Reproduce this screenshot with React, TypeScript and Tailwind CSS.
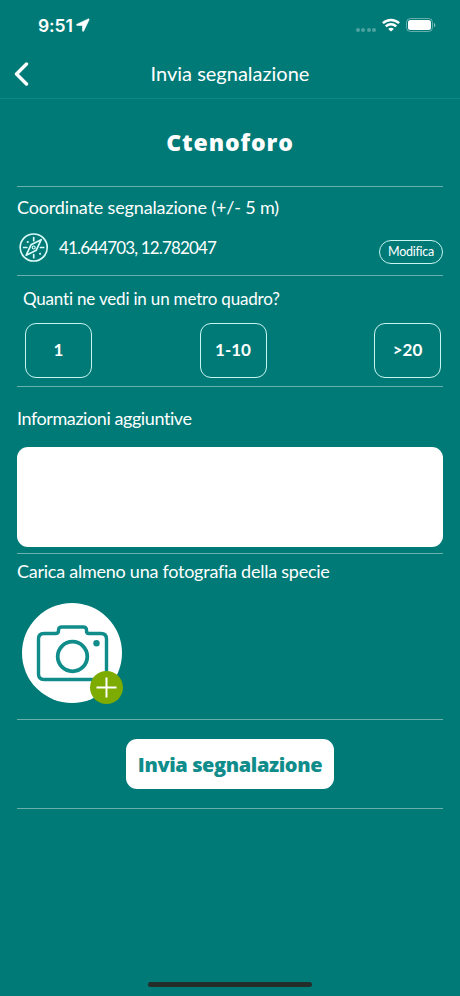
import type { ReactNode } from "react";

function StatusBar() {
  return (
    <div className="flex h-[50px] items-center justify-between pl-[38px] pr-[24px]">
      <div className="flex items-center gap-[3px] pt-[2px]">
        <span className="font-['Inter',sans-serif] text-[17.500px] font-semibold leading-none tracking-[-0.1px]">9:51</span>
        <svg className="mb-[2px]" width="14" height="14" viewBox="0 0 14 14" fill="white">
          <path d="M12.300.9.900 6.200c-.7.400-.6 1.200.3 1.200l5.300.100v5.200c0 .9.900 1 1.200.3L13.100 1.700c.2-.5-.2-1-.8-.8Z" stroke="white" strokeWidth=".6" />
        </svg>
      </div>
      <div className="flex items-center">
        <div className="mr-[6px] mt-[9px] flex gap-[1.500px]">
          {[0, 1, 2, 3].map((i) => (
            <span key={i} className="h-1 w-1 rounded-full bg-white/30" />
          ))}
        </div>
        <svg width="18" height="14" viewBox="0 0 18 14" fill="none" stroke="white" strokeWidth="2.500">
          <path d="M.9 5.100C5.500.8 12.500.8 17.100 5.100" />
          <path d="M3.800 8.400c3-2.800 7.400-2.800 10.400 0" />
          <path d="M9 13.600 6.200 10.900c1.600-1.400 4-1.400 5.600 0Z" fill="white" stroke="none" />
        </svg>
        <svg className="ml-[6px]" width="30" height="14" viewBox="0 0 30 14">
          <rect x=".5" y=".5" width="26" height="13" rx="4" fill="none" stroke="white" strokeOpacity=".4" />
          <rect x="2" y="2" width="23" height="10" rx="2.500" fill="white" />
          <path d="M28 4.700c1.800.8 1.800 3.800 0 4.600Z" fill="white" fillOpacity=".5" />
        </svg>
      </div>
    </div>
  );
}

function Section({ className, children }: { className: string; children?: ReactNode }) {
  return <section className={`mx-[17px] border-b border-[#69b1af] ${className}`}>{children}</section>;
}

function Compass() {
  return (
    <svg width="30" height="30" viewBox="0 0 30 30" fill="none" stroke="#d8fbf8" strokeWidth="1.700" strokeLinecap="round">
      <circle cx="14.700" cy="14.500" r="13.500" />
      <path d="M14.700 4.500v3.200M14.700 21.500v3.200M4.600 14.500h3.200M21.500 14.500h3.200" />
      <path d="M22.200 6.700 17.300 17.200 7.200 22.200 12 11.800Z" strokeLinejoin="round" />
      <circle cx="14.700" cy="14.500" r="1.500" strokeWidth="1.200" />
      <path d="M8.700 8.900h.1M21 20.700h.1" strokeWidth="2" />
    </svg>
  );
}

function CameraButton() {
  return (
    <button className="relative block h-[100px] w-[100px] rounded-full bg-white">
      <svg width="100" height="100" viewBox="0 0 100 100" fill="none">
        <path
          d="M22 30.500H33Q36.500 30.500 36.500 28V27Q36.500 24 40 24H61Q64.500 24 64.500 27V28Q64.500 30.500 67 30.500H79Q84.500 30.500 84.500 36V71Q84.500 76.500 79 76.500H22Q16.500 76.500 16.500 71V36Q16.500 30.500 22 30.500Z"
          stroke="#108d8b"
          strokeWidth="3.400"
        />
        <circle cx="50.500" cy="53.500" r="14.800" stroke="#108d8b" strokeWidth="3.800" />
        <circle cx="74.500" cy="40.300" r="3.200" fill="#108d8b" />
      </svg>
      <span className="absolute left-[67.500px] top-[67.500px] block h-[33px] w-[33px] rounded-full bg-[#7dab00]">
        <svg width="33" height="33" viewBox="0 0 33 33" stroke="white" strokeWidth="2">
          <path d="M16.500 6.500v20M6.500 16.500h20" />
        </svg>
      </span>
    </button>
  );
}

export default function App() {
  return (
    <main className="flex h-[996px] w-[460px] flex-col overflow-hidden bg-[#007a77] font-['Lato',sans-serif] text-white [font-variant-ligatures:none]">
      <StatusBar />
      <header className="grid h-[49px] grid-cols-[60px_1fr_60px] items-center border-b border-[#108581]">
        <button className="pl-[14px]">
          <svg width="15" height="24" viewBox="0 0 15 24" fill="none" stroke="white" strokeWidth="3.400" strokeLinecap="round" strokeLinejoin="round">
            <path d="M12.500 2 2.500 12l10 10" />
          </svg>
        </button>
        <h1 className="whitespace-nowrap pb-[2px] text-center text-[20px] leading-6">Invia segnalazione</h1>
      </header>
      <Section className="flex h-[88px] items-center justify-center">
        <h2 className="whitespace-nowrap pb-[2px] font-['Open_Sans',sans-serif] text-[23px] font-extrabold leading-7 tracking-[0.900px]">Ctenoforo</h2>
      </Section>
      <Section className="h-[89px] pt-[8px]">
        <p className="whitespace-nowrap text-[18px] leading-6 tracking-[-0.150px]">Coordinate segnalazione (+/- 5 m)</p>
        <div className="flex pl-[2px] pt-[14px]">
          <Compass />
          <span className="ml-[10px] whitespace-nowrap text-[17px] leading-[29px] tracking-[-0.850px]">41.644703, 12.782047</span>
          <button className="ml-auto mt-[7px] h-6 w-[64px] rounded-full border border-[#c9f5f1] pt-px text-[12.500px] leading-none tracking-[-0.250px]">Modifica</button>
        </div>
      </Section>
      <Section className="h-[111px] pt-[11px]">
        <p className="whitespace-nowrap pl-[6px] text-[17px] leading-6 tracking-[-0.180px]">Quanti ne vedi in un metro quadro?</p>
        <div className="flex justify-between pl-[8px] pr-[2px] pt-[12px]">
          {["1", "1-10", ">20"].map((label) => (
            <button key={label} className="h-[55px] w-[67px] rounded-[11px] border border-[#c9f5f1] pb-[2px] text-[17px] font-bold leading-none">
              {label}
            </button>
          ))}
        </div>
      </Section>
      <Section className="h-[167px] pt-[19px]">
        <label htmlFor="notes" className="block whitespace-nowrap text-[18px] leading-6 tracking-[-0.420px]">Informazioni aggiuntive</label>
        <textarea id="notes" className="mt-[17px] block h-[100px] w-full resize-none rounded-[11px] bg-white p-3 text-[#007a77] outline-none" />
      </Section>
      <Section className="h-[166px] pt-[5px]">
        <p className="whitespace-nowrap text-[18px] leading-6 tracking-[-0.250px]">Carica almeno una fotografia della specie</p>
        <div className="pl-[5px] pt-[20px]">
          <CameraButton />
        </div>
      </Section>
      <Section className="flex h-[89px] items-center justify-center">
        <button className="h-[50px] w-[208px] whitespace-nowrap rounded-[11px] bg-white pt-px font-['Open_Sans',sans-serif] text-[20px] font-extrabold tracking-[-0.400px] text-[#108d8b]">Invia segnalazione</button>
      </Section>
      <div className="mx-auto mb-[9px] mt-auto h-[5px] w-[164px] rounded-full bg-[#252d2b]" />
    </main>
  );
}
